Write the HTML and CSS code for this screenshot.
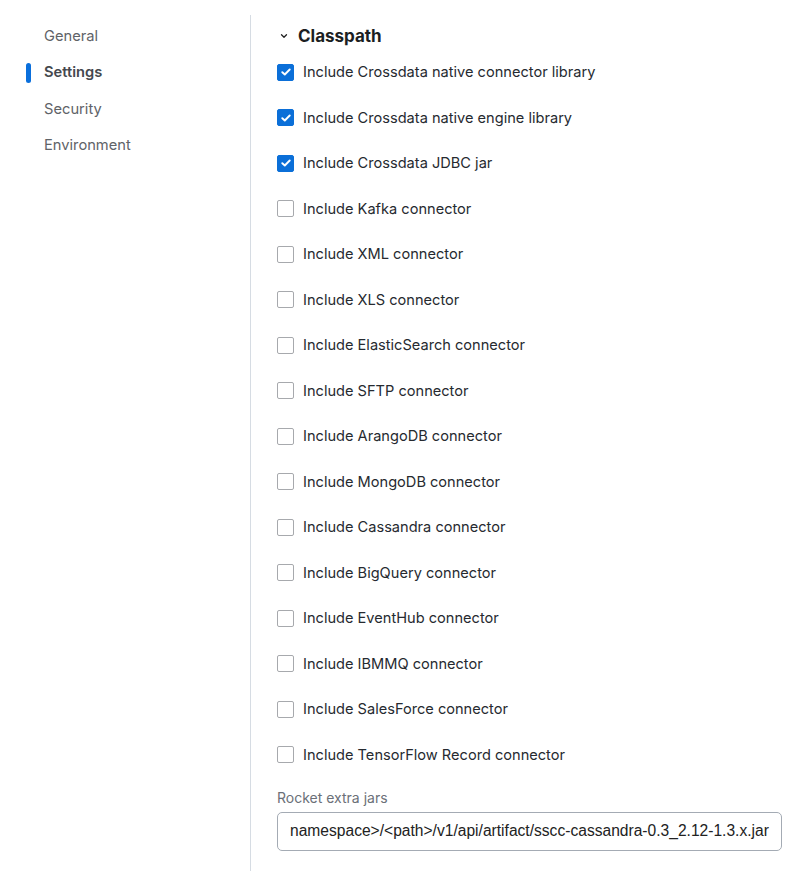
FILE: index.html
```html
<!DOCTYPE html>
<html>
<head>
<meta charset="utf-8">
<link rel="stylesheet" href="styles.css">
</head>
<body>
<div class="layout">
  <nav class="sidebar">
    <div class="nav-item">General</div>
    <div class="nav-item active">Settings</div>
    <div class="nav-item">Security</div>
    <div class="nav-item">Environment</div>
  </nav>
  <main class="content">
    <div class="section-title">
      <svg class="chevron" width="10" height="10" viewBox="0 0 10 10"><path d="M2.5 3.8 L5 6.3 L7.5 3.8" fill="none" stroke="#222" stroke-width="1.3" stroke-linecap="round" stroke-linejoin="round"/></svg>
      <span>Classpath</span>
    </div>
    <div class="options">
      <label class="opt"><span class="box checked"><svg width="10" height="8" viewBox="0 0 10 8"><path d="M1.3 4.2 L3.8 6.5 L8.7 1.5" fill="none" stroke="#fff" stroke-width="1.9" stroke-linecap="round" stroke-linejoin="round"/></svg></span>Include Crossdata native connector library</label>
      <label class="opt"><span class="box checked"><svg width="10" height="8" viewBox="0 0 10 8"><path d="M1.3 4.2 L3.8 6.5 L8.7 1.5" fill="none" stroke="#fff" stroke-width="1.9" stroke-linecap="round" stroke-linejoin="round"/></svg></span>Include Crossdata native engine library</label>
      <label class="opt"><span class="box checked"><svg width="10" height="8" viewBox="0 0 10 8"><path d="M1.3 4.2 L3.8 6.5 L8.7 1.5" fill="none" stroke="#fff" stroke-width="1.9" stroke-linecap="round" stroke-linejoin="round"/></svg></span>Include Crossdata JDBC jar</label>
      <label class="opt"><span class="box"></span>Include Kafka connector</label>
      <label class="opt"><span class="box"></span>Include XML connector</label>
      <label class="opt"><span class="box"></span>Include XLS connector</label>
      <label class="opt"><span class="box"></span>Include ElasticSearch connector</label>
      <label class="opt"><span class="box"></span>Include SFTP connector</label>
      <label class="opt"><span class="box"></span>Include ArangoDB connector</label>
      <label class="opt"><span class="box"></span>Include MongoDB connector</label>
      <label class="opt"><span class="box"></span>Include Cassandra connector</label>
      <label class="opt"><span class="box"></span>Include BigQuery connector</label>
      <label class="opt"><span class="box"></span>Include EventHub connector</label>
      <label class="opt"><span class="box"></span>Include IBMMQ connector</label>
      <label class="opt"><span class="box"></span>Include SalesForce connector</label>
      <label class="opt"><span class="box"></span>Include TensorFlow Record connector</label>
    </div>
    <div class="field">
      <div class="field-label">Rocket extra jars</div>
      <div class="input">namespace&gt;/&lt;path&gt;/v1/api/artifact/sscc-cassandra-0.3_2.12-1.3.x.jar</div>
    </div>
  </main>
</div>
</body>
</html>
```

FILE: styles.css
```css
* { box-sizing: border-box; }
html, body { margin: 0; padding: 0; background: #fff; }
body { font-family: Inter, "Noto Sans", sans-serif; color: #1f2329; }
.layout { display: flex; padding-top: 15px; min-height: 871px; }
.sidebar {
  width: 251px;
  border-right: 1px solid #d6dce3;
  padding-top: 10px;
  display: flex;
  flex-direction: column;
  gap: 14.4px;
}
.nav-item {
  position: relative;
  padding-left: 44px;
  font-size: 14.7px;
  line-height: 22px;
  color: #5f6368;
}
.nav-item.active { color: #44484e; font-weight: 600; }
.nav-item.active::before {
  content: "";
  position: absolute;
  left: 26px;
  top: 2px;
  width: 5px;
  height: 20px;
  border-radius: 3px;
  background: #0a6fdc;
}
.content { flex: 1; padding-left: 26px; padding-right: 29px; }
.section-title { display: flex; align-items: center; height: 30px; margin-top: 6px; }
.chevron { margin-left: 2px; margin-right: 9px; }
.section-title span { font-size: 17px; font-weight: 700; color: #1b1e22; }
.options { display: flex; flex-direction: column; margin-top: 6px; }
.opt {
  display: flex;
  align-items: center;
  height: 45.53px;
  font-size: 14.6px;
  color: #262a30;
}
.opt:first-child { height: 30px; margin-bottom: 8px; }
.box {
  width: 17px; height: 17px;
  border: 1px solid #a7a9ad;
  border-radius: 2px;
  margin-right: 9px;
  display: flex; align-items: center; justify-content: center;
  flex: none;
}
.box.checked { background: #0b6fd8; border-color: #0b6fd8; }
.field { margin-top: 11px; }
.field-label { font-size: 14px; color: #6b7078; line-height: 18px; margin-bottom: 5px; }
.input {
  height: 39px;
  border: 1px solid #a4abb4;
  border-radius: 5px;
  padding: 0 12px;
  display: flex; align-items: center;
  font-family: "Liberation Sans", Arial, sans-serif;
  font-size: 15.6px;
  color: #222;
  white-space: nowrap;
  overflow: hidden;
}
```
